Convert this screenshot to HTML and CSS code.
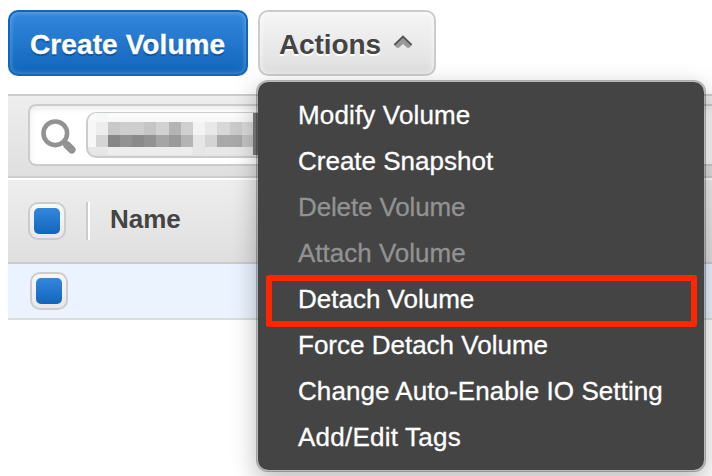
FILE: index.html
```html
<!DOCTYPE html>
<html lang="en">
<head>
<meta charset="utf-8">
<title>Volumes</title>
<link rel="stylesheet" href="styles.css">
</head>
<body>
<div class="actions-bar">
  <button class="btn btn-primary">Create Volume</button>
  <div class="dropdown">
    <button class="btn btn-default">Actions
      <svg class="caret" width="20" height="14" viewBox="0 0 20 14"><path d="M10 1 19 9.7 16.4 12.7H14.2L10 8.9 5.8 12.7H3.6L1 9.7Z" fill="#999"/><path d="M1.4 9.9 10 1.6l8.6 8.3" fill="none" stroke="#555" stroke-width="2"/></svg>
    </button>
    <ul class="menu">
      <li class="wide">Modify Volume</li>
      <li>Create Snapshot</li>
      <li class="disabled narrow">Delete Volume</li>
      <li class="disabled">Attach Volume</li>
      <li class="marked">Detach Volume</li>
      <li>Force Detach Volume</li>
      <li class="long">Change Auto-Enable IO Setting</li>
      <li class="tags">Add/Edit Tags</li>
    </ul>
  </div>
</div>
<div class="panel">
  <div class="toolbar">
    <div class="search">
      <svg class="magnifier" width="36" height="36" viewBox="0 0 36 36" fill="none" stroke="#929292"><circle cx="14.3" cy="14.3" r="11.8" stroke-width="4.6"/><path d="m22.6 22.6 4 4" stroke-width="5.5"/><path d="m26 26 4.8 4.8" stroke-width="7.6" stroke-linecap="round"/></svg>
      <div class="token">
        <svg width="166" height="42" viewBox="0 0 166 42" shape-rendering="crispEdges">
          <path fill="#f6f8f8" d="M8 0h12v9H8z"/><path fill="#f7f7f7" d="M0 9h8v25H0z"/>
          <path fill="#ededed" d="M8 9h12v13H8zM20 34h84v8H20z"/>
          <path fill="#d5d5d5" d="M8 22h12v12H8z"/>
          <path fill="#c8c8c8" d="M20 9h12v13H20z"/><path fill="#cecece" d="M32 9h24v13H32z"/><path fill="#c5c5c5" d="M56 9h12v13H56z"/><path fill="#d2d2d2" d="M68 9h13v13H68z"/><path fill="#b4b4b4" d="M81 9h12v13H81z"/><path fill="#cfcfcf" d="M93 9h12v13H93z"/>
          <path fill="#868686" d="M20 22h12v12H20z"/><path fill="#929292" d="M32 22h12v12H32zM56 22h12v12H56z"/><path fill="#8a8a8a" d="M44 22h12v12H44z"/><path fill="#a5a5a5" d="M68 22h13v12H68z"/><path fill="#999" d="M81 22h12v12H81z"/><path fill="#b4b4b4" d="M93 22h12v12H93z"/>
          <path fill="#f3f3f3" d="M105 9h12v13h-12z"/><path fill="#e6e6e6" d="M105 22h12v20h-12z"/>
          <path fill="#e8e8e8" d="M117 9h12v13h-12zM117 34h49v8h-49z"/><path fill="#d4d4d4" d="M117 22h12v12h-12z"/>
          <path fill="#d8d8d8" d="M129 9h13v13h-13zM154 9h11v13h-11z"/><path fill="#cbcbcb" d="M142 9h12v13h-12z"/>
          <path fill="#a9a9a9" d="M129 22h25v12h-25z"/><path fill="#c3c3c3" d="M154 22h11v12h-11z"/>
          <path fill="#7d7d7d" d="M165 0h1v42h-1z"/>
        </svg>
        <span class="token-edge"></span>
      </div>
    </div>
  </div>
  <div class="thead">
    <span class="check"></span>
    <span class="divider"></span>
    <span class="col-name">Name</span>
  </div>
  <div class="row"><span class="check"></span></div>
</div>
</body>
</html>
```
FILE: styles.css
```css
*, ::before, ::after { box-sizing: border-box; }
body {
  margin: 0;
  padding: 10px 0 0 8px;
  height: 476px;
  overflow: hidden;
  background: #fff;
  color: #444;
  font-family: "Liberation Sans", Arial, sans-serif;
}
.actions-bar { display: flex; gap: 10px; height: 66px; margin-bottom: 18px; }
.btn {
  display: flex;
  align-items: center;
  height: 66px;
  padding: 3px 0 0 20px;
  border: 2px solid;
  border-radius: 10px;
  font: bold 28px "Liberation Sans", Arial, sans-serif;
  white-space: nowrap;
}
.btn-primary {
  width: 240px;
  color: #fff;
  border-color: #1166bb;
  background: linear-gradient(#3388dd, #1166bb);
  box-shadow: inset 0 0 4px 1px rgba(255, 255, 255, .25);
  text-shadow: 0 2px 1px rgba(0, 40, 100, .45);
  letter-spacing: .1px;
  -webkit-text-stroke: .3px;
}
.btn-default {
  width: 178px;
  padding-left: 19px;
  color: #444;
  border-color: #ccc;
  background: linear-gradient(#f6f6f6, #dfdfdf);
  box-shadow: inset 0 0 4px 1px rgba(255, 255, 255, .6);
  text-shadow: 0 2px 0 #fff;
  letter-spacing: -.1px;
}
.caret { margin: -5px 0 0 12px; }
.dropdown { position: relative; }
.menu {
  position: absolute;
  z-index: 2;
  top: 70px;
  left: -2px;
  width: 450px;
  height: 392px;
  margin: 0;
  padding: 10px 8px;
  list-style: none;
  color: #fff;
  background: #444;
  background-clip: padding-box;
  border: 2px solid rgba(0, 0, 0, .27);
  border-radius: 12px;
  box-shadow: 0 8px 24px rgba(0, 0, 0, .27);
  font-size: 26px;
  line-height: 46px;
  white-space: nowrap;
}
.menu li { position: relative; height: 46px; padding-left: 32px; -webkit-text-stroke: .3px; }
.menu .wide { letter-spacing: .15px; }
.menu .narrow { letter-spacing: -.13px; }
.menu .long { letter-spacing: .07px; }
.menu .tags { letter-spacing: .23px; }
.menu .disabled { color: #929292; }
.menu .marked::after {
  content: "";
  position: absolute;
  top: -1px;
  left: 0;
  width: 431px;
  height: 52px;
  border: 6px solid #ff2600;
  border-radius: 3px;
}
.panel { overflow: hidden; }
.toolbar {
  height: 84px;
  padding: 8px 0 0 20px;
  border: solid #ccc;
  border-width: 2px 0;
  background: linear-gradient(#eee, #dfdfdf);
}
.search {
  display: flex;
  height: 62px;
  padding: 6px 0 0 11px;
  border: 2px solid #ccc;
  border-right: 0;
  border-radius: 8px 0 0 8px;
  background: #fff;
  box-shadow: inset 0 3px 6px rgba(0, 0, 0, .08);
}
.magnifier { margin: 7px 9px 0 0; }
.token {
  display: flex;
  width: 240px;
  height: 46px;
  border: 2px solid #ccc;
  border-top-width: 1px;
  border-radius: 10px;
  background: linear-gradient(#fcfcfc, #e4e4e4);
  overflow: hidden;
}
.token-edge { width: 5px; height: 42px; background: #7d7d7d; }
.thead {
  display: flex;
  align-items: flex-start;
  height: 86px;
  padding: 22px 0 0 20px;
  border-top: 2px solid #fff;
  border-bottom: 2px solid #ccc;
  background: linear-gradient(#eee, #dfdfdf);
}
.check {
  display: block;
  flex: none;
  width: 38px;
  height: 38px;
  padding: 4px;
  border: 2px solid #ccc;
  border-radius: 10px;
  background: linear-gradient(#f8f8f8, #e8e8e8);
}
.check::before {
  content: "";
  display: block;
  width: 26px;
  height: 26px;
  border-radius: 5px;
  background: linear-gradient(#3388dd, #1166bb);
}
.divider { width: 4px; height: 38px; margin-left: 20px; border-left: 2px solid #ccc; border-right: 2px solid #fff; }
.col-name { margin-left: 20px; font-weight: bold; font-size: 26px; line-height: 34px; }
.row { height: 56px; padding: 8px 0 0 22px; border-bottom: 2px solid #ddd; background: #eaf3ff; }
```
